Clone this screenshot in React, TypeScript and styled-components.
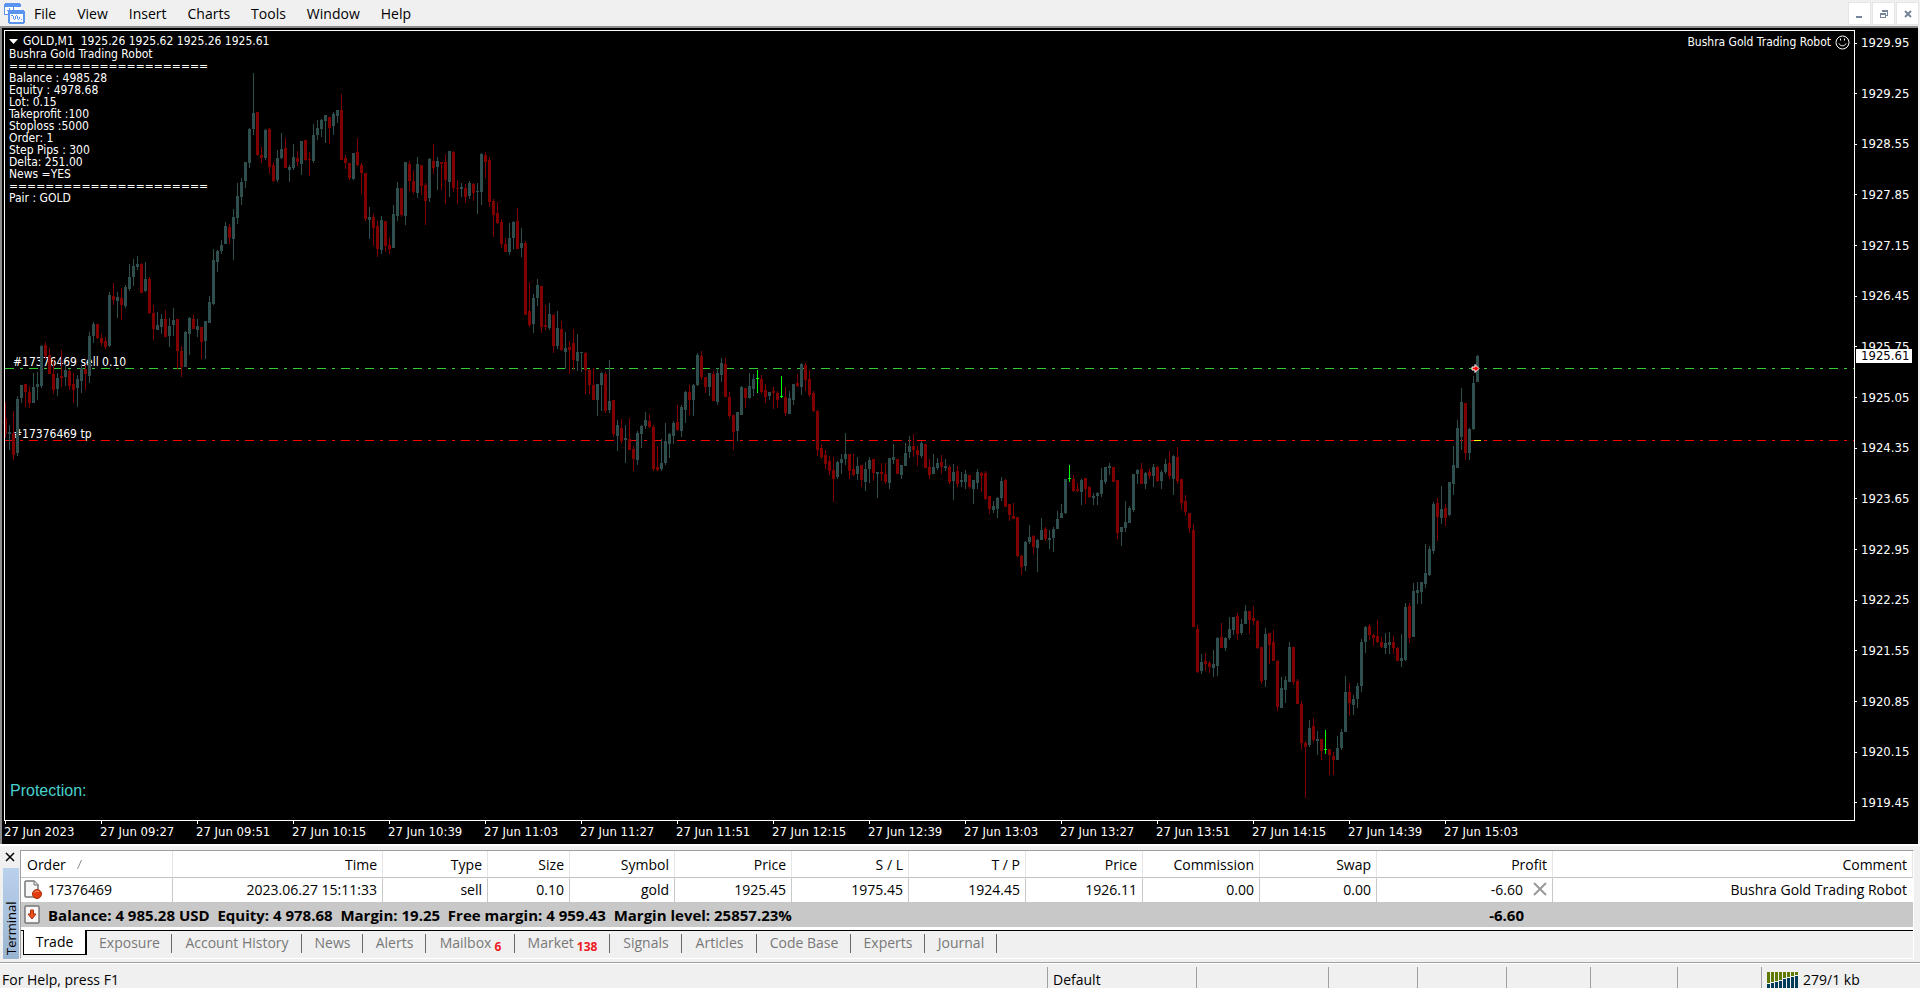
import React from "react";
import styled, { createGlobalStyle, css } from "styled-components";

const UI_FONT = '"Open Sans", "Noto Sans", sans-serif';
const CHART_FONT = '"DejaVu Sans Condensed", "DejaVu Sans", sans-serif';

const GlobalStyle = createGlobalStyle`
  * { box-sizing: border-box; }
  body { margin: 0; background: #f0f0f0; font-family: ${UI_FONT}; font-size: 14px; color: #000; }
  button { font: inherit; color: inherit; border: 0; padding: 0; background: none; }
`;

/* One candle per minute: direction (g up, r down, l doji), high, body top, body bottom, low */
const CANDLES = `
r402 418 434 438,g425 432 434 450,r411 433 455 460,g396 399 453 456,g385 385 398 403,r384 384 392 407,
r386 392 403 408,g373 387 403 403,g372 384 387 400,g345 346 386 388,r342 345 356 360,r348 355 374 374,
r360 374 390 394,g373 378 389 396,r350 376 378 387,g364 370 377 386,r369 371 386 390,r373 384 390 403,
g375 379 388 407,g365 368 381 393,r365 369 374 390,g332 336 376 383,g322 324 336 343,r324 324 338 339,
r334 338 343 346,r337 341 347 349,g292 295 346 347,r283 296 300 305,g292 297 301 318,r288 298 305 320,
g285 287 306 308,g264 277 289 291,g259 266 277 286,g256 264 267 270,r263 264 293 293,g262 279 291 292,
r277 279 313 314,r305 313 329 340,g312 325 330 330,g314 319 327 334,r310 319 337 337,g318 326 336 347,
g308 320 325 336,r319 319 351 369,r346 351 367 377,g331 332 367 367,g317 318 334 355,r315 319 329 329,
g319 326 330 337,r327 327 342 359,g321 321 341 359,g296 302 323 323,g249 260 304 305,g250 251 262 272,
g240 245 251 254,g222 226 244 244,r224 227 238 244,g209 217 239 260,g183 196 218 224,g178 182 197 205,
g162 162 181 188,g128 129 163 168,g73 113 129 135,r112 112 155 156,r147 155 158 163,g129 130 158 160,
r128 129 167 174,r162 165 181 182,g150 158 180 182,g133 149 158 159,r138 148 168 168,g165 167 170 182,
g144 157 168 170,r151 158 162 166,g141 141 164 175,r140 140 160 161,r152 159 160 176,g124 135 161 163,
g120 128 135 140,g119 120 129 137,g115 115 121 143,r117 117 128 144,g112 114 126 135,g110 110 116 123,
r94 110 160 160,r155 158 163 169,r163 163 178 180,g153 153 179 180,r138 152 165 166,r163 165 173 194,
r173 173 219 221,g207 217 220 239,r214 217 228 246,r221 226 249 257,g216 220 250 254,r221 221 246 252,
r238 245 249 254,g205 214 248 248,g182 188 216 221,r188 188 215 217,g162 162 216 225,r161 164 181 191,
r170 181 192 194,g157 164 193 198,r165 165 186 195,r183 185 201 225,g158 159 198 202,r144 161 168 174,
g157 161 167 190,r162 162 164 190,r154 162 180 204,g151 151 182 197,r151 152 188 192,r180 188 189 204,
g183 187 189 197,r184 188 197 203,g181 183 196 199,r183 184 193 201,g183 191 192 214,g153 154 192 205,
r152 155 162 178,r157 160 202 207,r199 201 215 237,r202 213 223 224,r219 222 244 248,r238 244 252 252,
g223 238 252 255,g221 222 238 249,r208 221 249 249,g228 243 248 257,r241 243 315 315,r282 311 325 327,
g294 298 324 333,g279 285 298 306,r286 286 327 333,r305 325 327 330,g303 314 328 330,r314 315 346 353,
g311 328 346 349,r321 329 350 351,g332 348 352 369,r341 347 350 374,r329 343 360 370,g334 352 361 371,
g352 352 353 372,r352 353 370 394,r369 370 385 394,r368 385 400 400,g384 384 400 416,g372 373 385 411,
r372 374 411 413,g360 401 410 413,r400 400 434 437,g420 425 436 451,r419 428 441 444,g425 438 440 463,
r418 439 450 450,r446 449 459 471,g431 433 460 465,g425 426 434 448,g412 420 426 429,r414 421 427 428,
r425 427 469 471,r446 467 470 471,g439 463 469 471,g423 441 463 465,g433 434 444 458,g421 423 436 444,
r405 422 430 431,g405 407 431 437,g391 392 410 423,r385 392 400 415,g384 385 400 416,g353 355 385 386,
r351 356 377 380,r377 377 387 393,g373 373 387 396,r371 374 401 401,g368 373 402 405,g358 363 375 382,
r358 364 397 397,r392 397 416 418,r415 415 432 450,g412 412 431 441,g386 387 415 415,r388 388 398 408,
g373 386 398 399,g374 379 389 396,l370 378 379 393,r375 379 392 394,r384 390 397 403,g392 392 396 400,
r387 391 393 409,r391 393 400 408,l376 396 397 398,r387 397 413 416,g391 398 414 414,g384 384 400 405,
r374 383 386 387,g363 364 387 395,r363 365 380 391,r370 379 395 397,r391 393 411 412,r410 411 450 456,
r444 448 457 459,r450 455 464 469,r456 461 471 475,r457 470 479 502,g461 462 477 479,g454 459 463 474,
g433 454 459 465,r454 454 471 479,r454 469 475 476,g457 466 474 480,r465 465 480 487,g462 469 482 491,
g457 460 469 483,r459 459 473 481,g472 472 474 498,r463 472 474 481,r463 474 482 484,g458 458 483 489,
g444 457 460 464,r459 459 474 474,g465 465 475 479,g443 453 466 466,g436 446 452 458,r434 446 450 457,
r446 450 455 466,g441 443 456 458,r444 444 468 468,r459 467 475 479,g454 467 474 474,g458 463 468 470,
r455 462 467 474,g459 466 468 471,r465 467 482 484,g464 472 481 500,r466 471 484 487,g472 480 482 487,
g470 474 482 489,r475 475 487 489,g480 480 489 504,g469 472 483 489,r472 473 476 492,r471 473 499 500,
r496 496 509 514,g501 506 510 513,g497 498 509 518,g477 481 498 501,r479 480 507 507,r504 504 515 521,
r503 516 519 519,r517 517 556 557,r555 556 567 575,g541 542 566 571,g525 537 542 544,r535 536 547 554,
g539 540 548 572,g518 530 540 540,r527 529 539 541,g530 538 540 549,g527 529 538 552,g511 519 529 529,
g504 513 518 518,g479 479 513 514,l465 478 479 482,r475 479 491 492,r483 489 491 492,g479 480 492 505,
r478 478 489 504,r486 487 497 498,g493 496 498 505,g492 493 496 505,g468 480 494 497,g467 467 482 484,
g463 466 468 475,r467 467 482 482,r480 480 533 539,g527 527 532 546,g501 522 528 532,g506 508 523 523,
g474 474 510 512,g469 470 474 484,r463 469 484 484,g472 473 484 489,r469 472 476 479,g464 467 476 487,
r466 467 481 482,g470 472 481 489,g459 464 472 474,r451 463 476 479,g455 456 479 495,r447 457 481 484,
r479 479 503 510,r495 501 512 516,r513 513 528 533,r524 530 627 627,r625 629 672 673,g654 662 671 674,
r653 661 664 671,r661 663 667 673,g650 664 668 677,g637 638 666 676,r623 637 648 648,g637 638 648 651,
g617 629 638 640,g617 617 630 635,r613 616 634 640,g619 624 633 635,g605 611 624 624,r611 611 620 634,
r606 618 621 625,r620 621 648 649,r647 647 681 684,g628 634 680 687,r633 633 645 664,r630 642 661 661,
r660 661 707 711,g677 688 708 708,g676 680 690 703,g642 647 682 682,r647 647 682 685,r679 681 704 704,
r701 704 743 750,r741 743 747 798,g720 728 745 747,r718 726 740 742,g731 739 741 755,r739 739 751 760,
l730 749 750 754,r749 749 755 775,r752 756 760 775,g736 748 760 760,g729 732 748 750,g676 692 732 732,
r683 692 703 716,g695 699 705 715,g683 686 699 708,g639 642 686 692,g626 627 642 653,r624 626 635 640,
r634 635 638 646,r620 636 642 643,r637 642 647 648,g633 643 648 654,g632 642 645 654,r636 642 648 654,
r647 648 661 661,g634 658 661 667,g603 607 660 661,r603 606 638 643,g583 591 637 637,g582 590 593 604,
g582 582 592 604,g544 573 584 588,g546 549 575 576,g502 504 551 554,r498 503 517 541,g486 509 518 524,
r504 508 518 526,g482 482 515 516,g446 465 484 495,g420 428 468 468,g388 402 437 450,r403 403 453 460,
g428 429 453 460,g376 383 429 430,g355 356 382 382`
  .trim()
  .split(/,\s*/)
  .map((row) => ({ dir: row[0], v: row.slice(1).split(" ").map(Number) }));

const COLORS: Record<string, string> = { g: "#2f4f4f", r: "#800000", l: "#00ff00" };

const MENU = ["File", "View", "Insert", "Charts", "Tools", "Window", "Help"];

const PRICES = Array.from({ length: 16 }, (_, i) => (1929.95 - i * 0.7).toFixed(2));

const TIMES = [
  "27 Jun 2023", "27 Jun 09:27", "27 Jun 09:51", "27 Jun 10:15", "27 Jun 10:39", "27 Jun 11:03",
  "27 Jun 11:27", "27 Jun 11:51", "27 Jun 12:15", "27 Jun 12:39", "27 Jun 13:03", "27 Jun 13:27",
  "27 Jun 13:51", "27 Jun 14:15", "27 Jun 14:39", "27 Jun 15:03",
];

const RULE = "=".repeat(22);
const COMMENT = [
  "Bushra Gold Trading Robot", RULE, "Balance : 4985.28", "Equity : 4978.68", "Lot: 0.15",
  "Takeprofit :100", "Stoploss :5000", "Order: 1", "Step Pips : 300", "Delta: 251.00", "News =YES",
  RULE, "Pair : GOLD",
];

const COLUMNS: { label: string; width?: number; value: string }[] = [
  { label: "Order", width: 152, value: "17376469" },
  { label: "Time", width: 210, value: "2023.06.27 15:11:33" },
  { label: "Type", width: 105, value: "sell" },
  { label: "Size", width: 82, value: "0.10" },
  { label: "Symbol", width: 105, value: "gold" },
  { label: "Price", width: 117, value: "1925.45" },
  { label: "S / L", width: 117, value: "1975.45" },
  { label: "T / P", width: 117, value: "1924.45" },
  { label: "Price", width: 117, value: "1926.11" },
  { label: "Commission", width: 117, value: "0.00" },
  { label: "Swap", width: 117, value: "0.00" },
  { label: "Profit", width: 176, value: "-6.60" },
  { label: "Comment", value: "Bushra Gold Trading Robot" },
];

const TABS: { label: string; width: number; count?: number }[] = [
  { label: "Trade", width: 64 },
  { label: "Exposure", width: 85 },
  { label: "Account History", width: 130 },
  { label: "News", width: 61 },
  { label: "Alerts", width: 63 },
  { label: "Mailbox", width: 89, count: 6 },
  { label: "Market", width: 95, count: 138 },
  { label: "Signals", width: 72 },
  { label: "Articles", width: 75 },
  { label: "Code Base", width: 94 },
  { label: "Experts", width: 74 },
  { label: "Journal", width: 72 },
];

const Page = styled.div`
  display: flex;
  flex-direction: column;
  min-height: 100vh;
`;

const MenuBar = styled.header`
  display: flex;
  align-items: center;
  height: 26px;
  padding: 1px 2px 0 4px;
`;

const MenuNav = styled.nav`
  display: flex;
  flex: 1;
  gap: 1px;
`;

const MenuItem = styled.button`
  padding: 0 10px;
  line-height: 24px;
  &:first-child { padding-left: 9px; }
`;

const WindowButtons = styled.div`
  display: flex;
  gap: 3px;
`;

const WindowButton = styled.button`
  width: 21px;
  height: 21px;
  background: #fff;
  box-shadow: 0 0 0 1px #e6e6e6;
  svg { display: block; }
`;

const ChartWindow = styled.main`
  flex: 1;
  display: grid;
  grid-template-columns: minmax(0, 1fr) 63px;
  grid-template-rows: minmax(0, 1fr) 23px;
  margin-right: 2px;
  padding: 2px 0 0 2px;
  border-top: 2px solid #8c8c8c;
  border-left: 2px solid #8c8c8c;
  background: #000;
  color: #fff;
  font-family: ${CHART_FONT};
  font-size: 12px;
`;

const Plot = styled.section`
  position: relative;
  min-height: 400px;
  overflow: hidden;
  border: 1px solid #fff;
`;

const Drawing = styled.svg`
  position: absolute;
  inset: 0;
  width: 100%;
  height: 100%;
  shape-rendering: crispEdges;
`;

const Info = styled.div`
  position: absolute;
  top: 3px;
  left: 4px;
  line-height: 12px;
  white-space: pre;
`;

const InfoTitle = styled.div`
  display: flex;
  align-items: center;
  gap: 5px;
  height: 14px;
`;

const RobotName = styled.div`
  position: absolute;
  top: 4px;
  right: 4px;
  display: flex;
  align-items: center;
  gap: 4px;
  line-height: 15px;
`;

const Protection = styled.div`
  position: absolute;
  left: 5px;
  bottom: 19px;
  color: #48d1cc;
  font: 16px/20px "Liberation Sans", Arial, sans-serif;
`;

const PriceAxis = styled.div`
  position: relative;
  display: flex;
  flex-direction: column;
  justify-content: space-between;
  padding: 6px 0 11px;
  font-size: 13px;
`;

const PriceLabel = styled.div`
  display: flex;
  align-items: center;
  gap: 4px;
  line-height: 14px;
  &::before {
    content: "";
    width: 2px;
    height: 1px;
    background: #fff;
  }
`;

const PriceTag = styled.div`
  position: absolute;
  top: 319px;
  left: 1px;
  width: 56px;
  padding-left: 5px;
  background: #fff;
  color: #000;
  line-height: 14px;
`;

const TimeAxis = styled.div`
  grid-column: 1 / -1;
  display: flex;
  overflow: hidden;
  font-size: 13px;
`;

const TimeLabel = styled.div`
  flex: 0 0 96px;
  line-height: 16px;
  white-space: nowrap;
  &::before {
    content: "";
    display: block;
    width: 1px;
    height: 3px;
    margin-left: 1px;
    background: #fff;
  }
`;

const Terminal = styled.section`
  display: grid;
  grid-template-columns: 20px minmax(0, 1fr);
  padding: 4px 6px 3px 0;
  border-top: 2px solid #fff;
`;

const TerminalSide = styled.div`
  display: flex;
  flex-direction: column;
  gap: 4px;
  padding-left: 3px;
`;

const CloseButton = styled.button`
  width: 14px;
  height: 14px;
  svg { display: block; margin: 0 auto; }
`;

const TerminalTitle = styled.div`
  flex: 1;
  width: 16px;
  background: linear-gradient(to top, #bad1ec, #99b4d1);
  font-size: 13px;
  line-height: 16px;
  writing-mode: vertical-rl;
  transform: rotate(180deg);
  padding-top: 4px;
`;

const TerminalBody = styled.div`
  border-left: 1px solid #a0a0a0;
  border-top: 1px solid #a0a0a0;
  border-right: 1px solid #fff;
  border-bottom: 1px solid #fff;
  padding-bottom: 3px;
`;

const Orders = styled.table`
  width: 100%;
  table-layout: fixed;
  border-collapse: separate;
  border-spacing: 0;
  background: #fff;
  border-bottom: 3px solid #fff;
  white-space: nowrap;
`;

const cell = css`
  padding: 0 5px 0 6px;
  font-weight: 400;
  text-align: right;
  &:first-child { text-align: left; }
`;

const HeadCell = styled.th<{ $width?: number }>`
  ${cell}
  width: ${(p) => (p.$width ? `${p.$width}px` : "auto")};
  height: 27px;
  border-right: 1px solid #e5e5e5;
  border-bottom: 1px solid #c0c0c0;
  svg { margin: 0 0 1px 11px; }
`;

const Cell = styled.td`
  ${cell}
  height: 24px;
  padding-bottom: 2px;
  border-right: 1px solid #c8c8c8;
  &:last-child { border-right-color: transparent; }
`;

const TotalCell = styled.td`
  ${cell}
  height: 25px;
  background: #c8c8c8;
  font-size: 15px;
  font-weight: 700;
  line-height: 20px;
  white-space: pre;
`;

const CellRow = styled.div<{ $end?: boolean }>`
  display: flex;
  align-items: center;
  justify-content: ${(p) => (p.$end ? "flex-end" : "flex-start")};
  gap: ${(p) => (p.$end ? "10px" : "6px")};
  margin: 0 0 0 ${(p) => (p.$end ? "0" : "-3px")};
  svg { display: block; flex: none; }
`;

const ProfitTotal = styled.div`
  padding-right: 24px;
`;

const TabBar = styled.div`
  display: flex;
  height: 25px;
  padding-left: 2px;
  border-top: 1px solid #000;
`;

const Tab = styled.button<{ $width: number; $active?: boolean }>`
  position: relative;
  display: flex;
  justify-content: center;
  align-items: center;
  gap: 3px;
  width: ${(p) => p.$width}px;
  height: 24px;
  padding-bottom: 2px;
  color: #787878;
  ${(p) =>
    p.$active
      ? css`
          margin-top: -1px;
          height: 25px;
          background: #fff;
          color: #000;
          border: solid #000;
          border-width: 0 2px 1px 1px;
        `
      : css`
          &::after {
            content: "";
            position: absolute;
            right: 0;
            top: 3px;
            height: 19px;
            width: 1px;
            background: #696969;
          }
        `}
`;

const Count = styled.span`
  margin-top: 8px;
  color: #ed1c24;
  font-size: 12px;
  font-weight: 700;
`;

const StatusBar = styled.footer`
  display: flex;
  height: 26px;
  padding-top: 4px;
  border-top: 1px solid #a0a0a0;
  box-shadow: inset 0 1px 0 #fff;
`;

const StatusCell = styled.div<{ $width?: number }>`
  display: flex;
  align-items: center;
  gap: 5px;
  flex: ${(p) => (p.$width ? `0 0 ${p.$width}px` : "1")};
  padding: 4px 0 0 5px;
  border-left: 1px solid #a0a0a0;
  white-space: nowrap;
  &:first-child {
    border-left: 0;
    padding-left: 2px;
  }
`;

const AppIcon = () => (
  <svg width="21" height="21" viewBox="0 0 21 21" shapeRendering="crispEdges" aria-hidden="true">
    <path d="M1 1h16v10H1z" fill="#fff" />
    <path d="M1 0h15v1h1v3H1v7H0V1h1zM0 11h4v1H0zM3 7h2v1H3zM5 5h1v4H5zM9 4h1v3H9zM7 8h2v1H7z" fill="#5b93f0" />
    <path d="M5 8h15v12H5z" fill="#fff" />
    <path d="M5 7h15v1h1v12h-1v1H5v-1H4V8h1zM6 11v8h13v-8z" fill="#5b93f0" fillRule="evenodd" />
    <path d="M7 12h2v1H7zM9 13h1v3H9zM10 16h1v1h-1zM11 13h1v3h-1zM12 12h1v1h-1zM13 13h1v3h-1zM14 16h1v1h-1zM15 14h1v2h-1zM17 16h1v1h-1z" fill="#5b93f0" />
  </svg>
);

const MinimizeIcon = () => (
  <svg width="21" height="21" aria-hidden="true">
    <path d="M7 13h6v2H7z" fill="#77859a" />
  </svg>
);

const RestoreIcon = () => (
  <svg width="21" height="21" shapeRendering="crispEdges" aria-hidden="true">
    <path d="M9 7h6v2H9zM14 9h1v3h-1zM13 12h2v1h-2zM7 10h6v2H7zM7 12h1v3H7zM12 12h1v3h-1zM7 14h6v1H7z" fill="#77859a" />
  </svg>
);

const CloseIcon = () => (
  <svg width="21" height="21" aria-hidden="true">
    <path d="M8 8l6 6M14 8l-6 6" stroke="#77859a" strokeWidth="2" />
  </svg>
);

const SmileIcon = () => (
  <svg width="15" height="15" viewBox="0 0 15 15" fill="none" stroke="#fff" aria-hidden="true">
    <circle cx="7.5" cy="7.5" r="6.5" />
    <path d="M4 8.500c1 3 6 3 7 0" />
    <path d="M5 4.500h1M9 4.500h1" strokeWidth="2" />
  </svg>
);

const OrderIcon = () => (
  <svg width="18" height="19" viewBox="0 0 18 19" aria-hidden="true">
    <path d="M2 1h8l4 4v12H2q-1 0-1-1V2q0-1 1-1z" fill="#f7f7f7" stroke="#777" strokeWidth="1.500" />
    <path d="M10 1v4h4" fill="#ddd" stroke="#777" />
    <circle cx="13" cy="14" r="4.500" fill="#e23d10" stroke="#a82c0c" />
    <path d="M10.500 12.500q2-2.500 4.500-1" stroke="#ff9a6a" fill="none" />
  </svg>
);

const BalanceIcon = () => (
  <svg width="18" height="19" viewBox="0 0 18 19" aria-hidden="true">
    <rect x="1" y="1" width="14" height="17" rx="1" fill="#f7f7f7" stroke="#777" strokeWidth="1.500" />
    <path d="M6.500 5h3v4H12l-4 5-4-5h2.500z" fill="#e8501c" stroke="#a82c0c" />
  </svg>
);

const SIGNAL = [4, 5, 6, 7, 9, 10, 11, 12];
const SignalIcon = () => (
  <svg width="31" height="16" shapeRendering="crispEdges" aria-hidden="true">
    {SIGNAL.map((h, i) => (
      <g key={i}>
        <rect x={i * 4} y={0} width={3} height={15 - h} fill="#5f7a00" />
        <rect x={i * 4} y={16 - h} width={3} height={h} fill="#003c5a" />
      </g>
    ))}
  </svg>
);

const PLOT_TOP = 31;

const Candles = () => (
  <g transform={`translate(0 ${-PLOT_TOP})`}>
    {CANDLES.map(({ dir, v: [high, top, bottom, low] }, i) => (
      <g key={i} fill={COLORS[dir]}>
        <rect x={i * 4} y={high} width={1} height={low - high} />
        <rect x={i * 4 - 1} y={top} width={3} height={bottom - top} />
      </g>
    ))}
  </g>
);

const OrderLine = ({ y, color, label }: { y: number; color: string; label: string }) => (
  <g>
    <text x="8" y={y - 2} fill="#fff">{label}</text>
    <line x1="0" x2="100%" y1={y} y2={y} transform="translate(0 .5)" stroke={color} strokeDasharray="9 6 3 6" />
  </g>
);

export default function App() {
  return (
    <Page>
      <GlobalStyle />
      <MenuBar>
        <AppIcon />
        <MenuNav>
          {MENU.map((m) => (
            <MenuItem key={m}>{m}</MenuItem>
          ))}
        </MenuNav>
        <WindowButtons>
          <WindowButton aria-label="Minimize"><MinimizeIcon /></WindowButton>
          <WindowButton aria-label="Restore"><RestoreIcon /></WindowButton>
          <WindowButton aria-label="Close"><CloseIcon /></WindowButton>
        </WindowButtons>
      </MenuBar>

      <ChartWindow>
        <Plot>
          <Drawing role="img" aria-label="GOLD one minute candles">
            <OrderLine y={337} color="#32cd32" label="#17376469 sell 0.10" />
            <OrderLine y={409} color="#ff0000" label="#17376469 tp" />
            <Candles />
            <rect x="1469" y="409" width="7" height="1" fill="#ffff00" />
            <path
              d="M1467 336h3v-2.500l4 4-4 4V339h-3z"
              fill="#ff0000"
              stroke="#fff"
              shapeRendering="auto"
            />
          </Drawing>
          <Info>
            <InfoTitle>
              <svg width="9" height="5" aria-hidden="true"><path d="M0 0h9L4.500 5z" fill="#fff" /></svg>
              {"GOLD,M1  1925.26 1925.62 1925.26 1925.61"}
            </InfoTitle>
            {COMMENT.map((line, i) => (
              <div key={i}>{line}</div>
            ))}
          </Info>
          <RobotName>
            Bushra Gold Trading Robot
            <SmileIcon />
          </RobotName>
          <Protection>Protection:</Protection>
        </Plot>
        <PriceAxis>
          {PRICES.map((p) => (
            <PriceLabel key={p}>{p}</PriceLabel>
          ))}
          <PriceTag>1925.61</PriceTag>
        </PriceAxis>
        <TimeAxis>
          {TIMES.map((t) => (
            <TimeLabel key={t}>{t}</TimeLabel>
          ))}
        </TimeAxis>
      </ChartWindow>

      <Terminal>
        <TerminalSide>
          <CloseButton aria-label="Close terminal">
            <svg width="10" height="10" aria-hidden="true">
              <path d="M1 1l8 8M9 1l-8 8" stroke="#000" strokeWidth="1.500" />
            </svg>
          </CloseButton>
          <TerminalTitle>Terminal</TerminalTitle>
        </TerminalSide>
        <TerminalBody>
          <Orders>
            <thead>
              <tr>
                {COLUMNS.map((c, i) => (
                  <HeadCell key={i} $width={c.width} scope="col">
                    {c.label}
                    {i === 0 && (
                      <svg width="5" height="9" aria-hidden="true">
                        <path d="M4.500 0L.5 9" stroke="#888" />
                      </svg>
                    )}
                  </HeadCell>
                ))}
              </tr>
            </thead>
            <tbody>
              <tr>
                {COLUMNS.map((c, i) => (
                  <Cell key={i}>
                    {i === 0 ? (
                      <CellRow><OrderIcon />{c.value}</CellRow>
                    ) : c.label === "Profit" ? (
                      <CellRow $end>
                        {c.value}
                        <button aria-label="Close order">
                          <svg width="14" height="14">
                            <path d="M1 1l12 12M13 1L1 13" stroke="#999" strokeWidth="2" />
                          </svg>
                        </button>
                      </CellRow>
                    ) : (
                      c.value
                    )}
                  </Cell>
                ))}
              </tr>
            </tbody>
            <tfoot>
              <tr>
                <TotalCell colSpan={11}>
                  <CellRow>
                    <BalanceIcon />
                    {"Balance: 4 985.28 USD  Equity: 4 978.68  Margin: 19.25  Free margin: 4 959.43  Margin level: 25857.23%"}
                  </CellRow>
                </TotalCell>
                <TotalCell><ProfitTotal>-6.60</ProfitTotal></TotalCell>
                <TotalCell />
              </tr>
            </tfoot>
          </Orders>
          <TabBar role="tablist">
            {TABS.map((t, i) => (
              <Tab key={t.label} role="tab" aria-selected={i === 0} $width={t.width} $active={i === 0}>
                {t.label}
                {t.count && <Count>{t.count}</Count>}
              </Tab>
            ))}
          </TabBar>
        </TerminalBody>
      </Terminal>

      <StatusBar>
        <StatusCell>For Help, press F1</StatusCell>
        <StatusCell $width={149}>Default</StatusCell>
        <StatusCell $width={132} />
        <StatusCell $width={89} />
        <StatusCell $width={89} />
        <StatusCell $width={84} />
        <StatusCell $width={87} />
        <StatusCell $width={84} />
        <StatusCell $width={159}>
          <SignalIcon />
          279/1 kb
        </StatusCell>
      </StatusBar>
    </Page>
  );
}
